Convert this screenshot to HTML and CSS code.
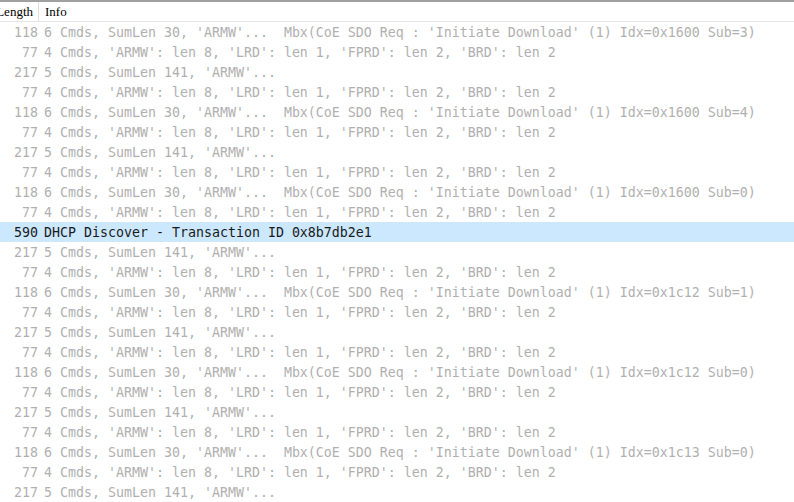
FILE: index.html
```html
<!DOCTYPE html>
<html>
<head>
<meta charset="utf-8">
<link rel="stylesheet" href="styles.css">
</head>
<body>
<div class="table">
  <div class="header">
    <div class="hcell hlen"><span>Length</span></div>
    <div class="hcell hinfo">Info</div>
  </div>
  <div class="rows">
    <div class="row"><span class="len">118</span><span class="info">6 Cmds, SumLen 30, 'ARMW'...  Mbx(CoE SDO Req : 'Initiate Download' (1) Idx=0x1600 Sub=3)</span></div>
    <div class="row"><span class="len">77</span><span class="info">4 Cmds, 'ARMW': len 8, 'LRD': len 1, 'FPRD': len 2, 'BRD': len 2</span></div>
    <div class="row"><span class="len">217</span><span class="info">5 Cmds, SumLen 141, 'ARMW'...</span></div>
    <div class="row"><span class="len">77</span><span class="info">4 Cmds, 'ARMW': len 8, 'LRD': len 1, 'FPRD': len 2, 'BRD': len 2</span></div>
    <div class="row"><span class="len">118</span><span class="info">6 Cmds, SumLen 30, 'ARMW'...  Mbx(CoE SDO Req : 'Initiate Download' (1) Idx=0x1600 Sub=4)</span></div>
    <div class="row"><span class="len">77</span><span class="info">4 Cmds, 'ARMW': len 8, 'LRD': len 1, 'FPRD': len 2, 'BRD': len 2</span></div>
    <div class="row"><span class="len">217</span><span class="info">5 Cmds, SumLen 141, 'ARMW'...</span></div>
    <div class="row"><span class="len">77</span><span class="info">4 Cmds, 'ARMW': len 8, 'LRD': len 1, 'FPRD': len 2, 'BRD': len 2</span></div>
    <div class="row"><span class="len">118</span><span class="info">6 Cmds, SumLen 30, 'ARMW'...  Mbx(CoE SDO Req : 'Initiate Download' (1) Idx=0x1600 Sub=0)</span></div>
    <div class="row"><span class="len">77</span><span class="info">4 Cmds, 'ARMW': len 8, 'LRD': len 1, 'FPRD': len 2, 'BRD': len 2</span></div>
    <div class="row selected"><span class="len">590</span><span class="info">DHCP Discover - Transaction ID 0x8b7db2e1</span></div>
    <div class="row"><span class="len">217</span><span class="info">5 Cmds, SumLen 141, 'ARMW'...</span></div>
    <div class="row"><span class="len">77</span><span class="info">4 Cmds, 'ARMW': len 8, 'LRD': len 1, 'FPRD': len 2, 'BRD': len 2</span></div>
    <div class="row"><span class="len">118</span><span class="info">6 Cmds, SumLen 30, 'ARMW'...  Mbx(CoE SDO Req : 'Initiate Download' (1) Idx=0x1c12 Sub=1)</span></div>
    <div class="row"><span class="len">77</span><span class="info">4 Cmds, 'ARMW': len 8, 'LRD': len 1, 'FPRD': len 2, 'BRD': len 2</span></div>
    <div class="row"><span class="len">217</span><span class="info">5 Cmds, SumLen 141, 'ARMW'...</span></div>
    <div class="row"><span class="len">77</span><span class="info">4 Cmds, 'ARMW': len 8, 'LRD': len 1, 'FPRD': len 2, 'BRD': len 2</span></div>
    <div class="row"><span class="len">118</span><span class="info">6 Cmds, SumLen 30, 'ARMW'...  Mbx(CoE SDO Req : 'Initiate Download' (1) Idx=0x1c12 Sub=0)</span></div>
    <div class="row"><span class="len">77</span><span class="info">4 Cmds, 'ARMW': len 8, 'LRD': len 1, 'FPRD': len 2, 'BRD': len 2</span></div>
    <div class="row"><span class="len">217</span><span class="info">5 Cmds, SumLen 141, 'ARMW'...</span></div>
    <div class="row"><span class="len">77</span><span class="info">4 Cmds, 'ARMW': len 8, 'LRD': len 1, 'FPRD': len 2, 'BRD': len 2</span></div>
    <div class="row"><span class="len">118</span><span class="info">6 Cmds, SumLen 30, 'ARMW'...  Mbx(CoE SDO Req : 'Initiate Download' (1) Idx=0x1c13 Sub=0)</span></div>
    <div class="row"><span class="len">77</span><span class="info">4 Cmds, 'ARMW': len 8, 'LRD': len 1, 'FPRD': len 2, 'BRD': len 2</span></div>
    <div class="row"><span class="len">217</span><span class="info">5 Cmds, SumLen 141, 'ARMW'...</span></div>
  </div>
</div>
</body>
</html>
```

FILE: styles.css
```css
html, body {
  margin: 0;
  padding: 0;
  background: #ffffff;
  overflow: hidden;
}
.table {
  width: 794px;
  height: 502px;
  overflow: hidden;
  display: flex;
  flex-direction: column;
}
.header {
  display: flex;
  height: 19px;
  border-top: 2px solid #a0a0a0;
  border-bottom: 1px solid #e5e5e5;
  font-family: "Liberation Serif", serif;
  font-size: 13px;
  color: #000000;
  flex: none;
}
.hcell {
  display: flex;
  align-items: center;
  white-space: nowrap;
  overflow: hidden;
}
.hlen {
  width: 38px;
  justify-content: flex-end;
  border-right: 1px solid #e0e0e0;
}
.hlen span {
  margin-right: 5px;
}
.hinfo {
  padding-left: 6px;
}
.rows {
  display: flex;
  flex-direction: column;
  font-family: "DejaVu Sans Mono", monospace;
  font-size: 13.29px;
  color: #b0b0b0;
}
.row {
  display: flex;
  height: 20px;
  align-items: center;
  white-space: pre;
}
.row.selected {
  background: #cce8ff;
  color: #1a1a1a;
}
.len {
  width: 38px;
  text-align: right;
  flex: none;
}
.info {
  padding-left: 6px;
}
```
